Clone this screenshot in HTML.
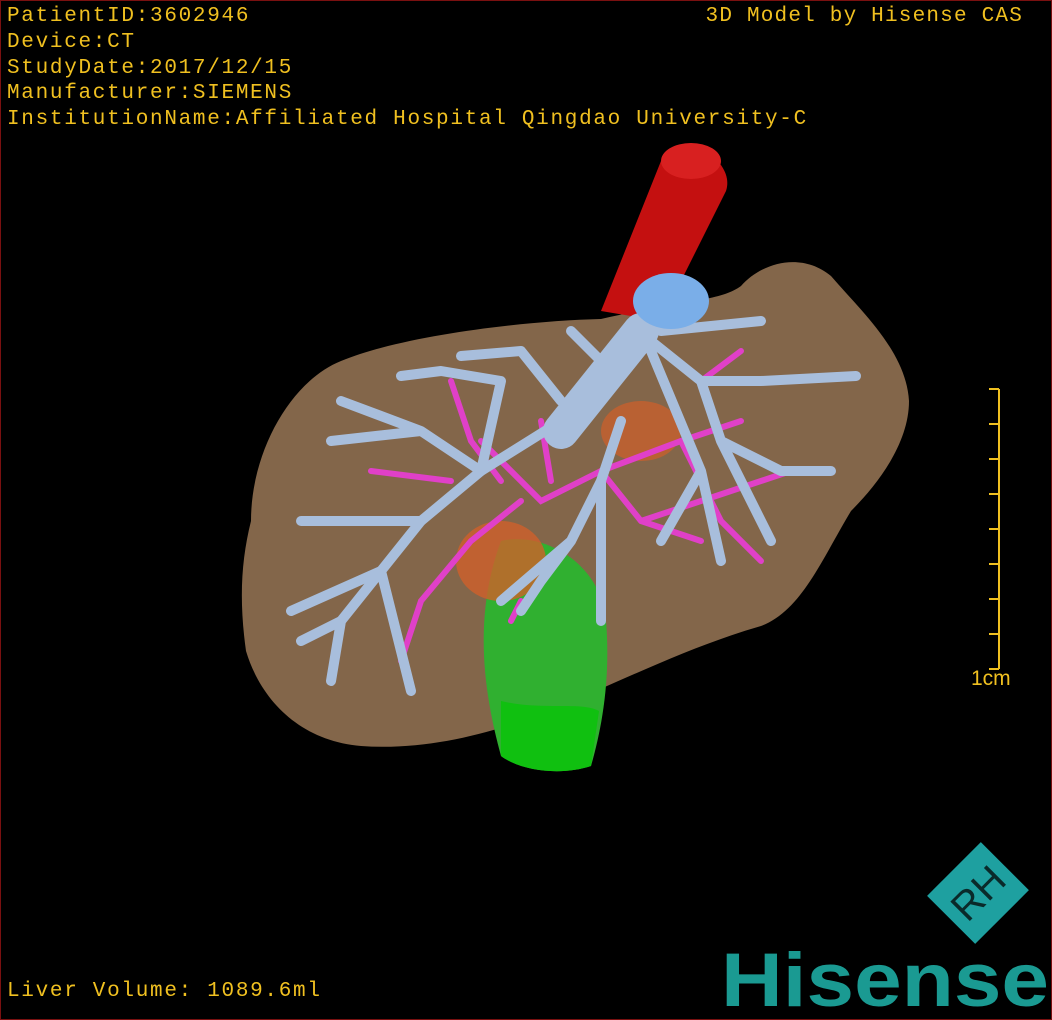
<!DOCTYPE html>
<html><head><meta charset="utf-8"><style>
html,body{margin:0;padding:0;background:#000}
#c{position:relative;width:1050px;height:1018px;border:1px solid #7a1010;overflow:hidden;background:#000;font-family:"Liberation Mono","DejaVu Sans Mono",monospace;color:#f0c020}
.t{position:absolute;left:6px;font-size:21px;line-height:25px;letter-spacing:1.7px;white-space:nowrap}
svg{position:absolute;left:0;top:0}
</style></head><body><div id="c">
<svg width="1052" height="1020" viewBox="0 0 1052 1020">
<path d="M250 520 C250 450 290 380 340 360 C400 335 520 320 600 318 C680 300 720 300 740 285 C760 262 800 250 830 275 C860 310 905 350 908 400 C908 440 880 480 850 510 C820 560 800 610 760 625 C690 645 620 680 560 705 C500 730 430 750 360 745 C300 740 260 700 245 650 C238 600 240 560 250 520 Z" fill="#83664a"/>
<path d="M705 150 C720 160 730 175 725 190 L660 320 L600 310 L660 160 Z" fill="#c41010"/>
<ellipse cx="690" cy="160" rx="30" ry="18" fill="#d82020"/>
<path d="M500 540 C540 530 600 560 605 620 C610 680 600 730 590 765 C560 775 520 770 500 755 C485 700 470 620 500 540 Z" fill="#30b030"/>
<path d="M500 700 C540 710 580 700 598 710 L590 765 C560 775 520 770 500 755 Z" fill="#10c010"/>
<ellipse cx="500" cy="560" rx="45" ry="40" fill="#d0602a" opacity=".8"/>
<ellipse cx="640" cy="430" rx="40" ry="30" fill="#d0602a" opacity=".7"/>
<g stroke="#e040c8" stroke-width="6" fill="none" stroke-linecap="round">
<path d="M480 440 L540 500 L600 470 L680 440 L740 420"/>
<path d="M520 500 L470 540 L420 600 L400 660"/>
<path d="M550 480 L540 420 M600 470 L640 520 L700 540 M640 520 L700 500 L790 470"/>
<path d="M450 380 L470 440 L500 480 M700 380 L740 350 M680 440 L720 520 L760 560"/>
<path d="M370 470 L450 480 M520 600 L510 620"/>
</g>
<g stroke="#a8bedc" stroke-width="10" fill="none" stroke-linecap="round" stroke-linejoin="round">
<path d="M560 430 L640 330" stroke-width="36"/>
<path d="M560 420 L480 470 L420 520 L380 570 L340 620 L330 680"/>
<path d="M420 520 L300 520 M380 570 L290 610 M380 570 L410 690 M340 620 L300 640"/>
<path d="M480 470 L420 430 L330 440 M420 430 L340 400 M480 470 L500 380 L440 370 L400 375"/>
<path d="M560 400 L520 350 L460 355 M600 360 L570 330"/>
<path d="M620 420 L600 480 L570 540 L540 580 L520 610 M600 480 L600 620 M570 540 L500 600"/>
<path d="M650 340 L700 380 L760 380 L855 375 M700 380 L720 440 L780 470 L830 470 M720 440 L770 540"/>
<path d="M660 330 L760 320 M650 350 L700 470 L720 560 M700 470 L660 540"/>
</g>
<ellipse cx="670" cy="300" rx="38" ry="28" fill="#7aaee8"/>
<g stroke="#f0c020" stroke-width="2" fill="none">
<path d="M998 388 V668"/>
<path d="M988 388 H998 M988 423 H998 M988 458 H998 M988 493 H998 M988 528 H998 M988 563 H998 M988 598 H998 M988 633 H998 M988 668 H998"/>
</g>
<g transform="translate(977,892) rotate(-45)">
<rect x="-38" y="-34" width="76" height="68" fill="#1ea0a0"/>
<text x="0" y="14" text-anchor="middle" font-family="Liberation Sans,sans-serif" font-size="40" fill="#0a2a2a">RH</text>
</g>
<text x="720" y="1005" font-family="Liberation Sans,sans-serif" font-weight="bold" font-size="76" fill="#1a9a92" textLength="328" lengthAdjust="spacingAndGlyphs">Hisense</text>
</svg>
<div class="t" style="top:3px">PatientID:3602946</div>
<div class="t" style="top:29px">Device:CT</div>
<div class="t" style="top:55px">StudyDate:2017/12/15</div>
<div class="t" style="top:80px">Manufacturer:SIEMENS</div>
<div class="t" style="top:106px">InstitutionName:Affiliated Hospital Qingdao University-C</div>
<div class="t" style="top:3px;left:auto;right:28px;letter-spacing:1.2px">3D Model by Hisense CAS</div>
<div class="t" style="top:978px">Liver Volume: 1089.6ml</div>
<div class="t" style="top:665px;left:970px;font-family:'Liberation Sans',sans-serif;letter-spacing:0">1cm</div>
</div></body></html>
